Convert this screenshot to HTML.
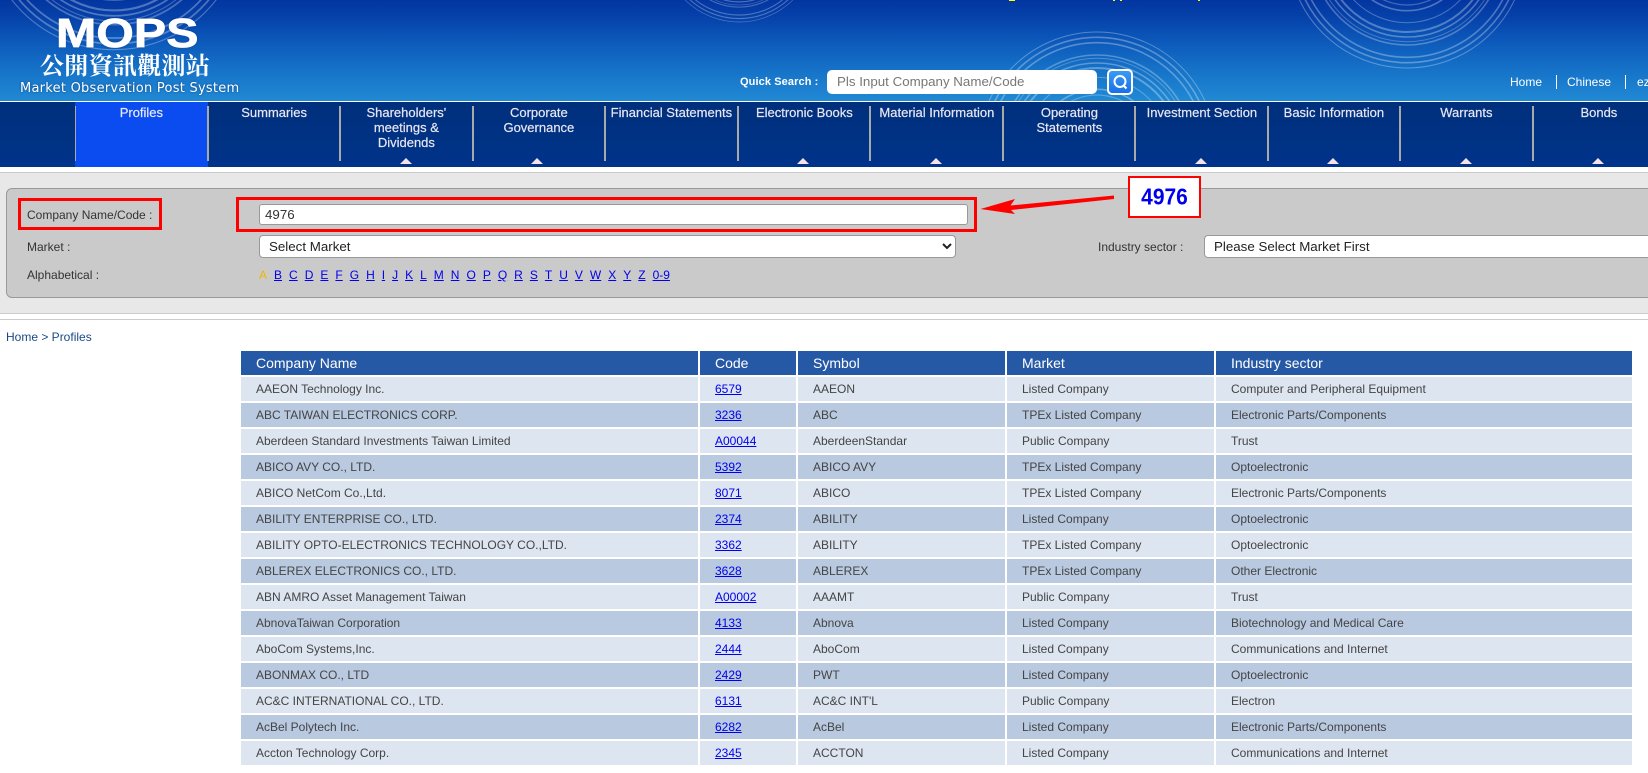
<!DOCTYPE html>
<html lang="en">
<head>
<meta charset="utf-8">
<title>MOPS - Profiles</title>
<style>
*{box-sizing:border-box}
html,body{margin:0;padding:0;width:1648px;height:773px;overflow:hidden;background:#fff}
body{position:relative;font-family:"Liberation Sans",Arial,sans-serif;font-size:12px;color:#444}
.a{position:absolute;white-space:nowrap}
#hdr{left:0;top:0;width:1648px;height:101px;background:linear-gradient(#0335a0 0%,#0540a8 15%,#0d5abb 42%,#1673c8 70%,#2189d4 100%);overflow:hidden}
#nav{left:0;top:102px;width:1648px;height:65px;background:linear-gradient(#00307c,#00338a);overflow:hidden}
.it{position:absolute;top:3px;width:132.75px;text-align:center;font-size:13px;line-height:15px;color:#e8e6f2;white-space:nowrap;-webkit-text-stroke:.2px #e8e6f2}
.sp{position:absolute;top:4px;width:2px;height:55px;background:#a9a9a9}
.tr{position:absolute;top:56px;width:0;height:0;border-left:6.5px solid transparent;border-right:6.5px solid transparent;border-bottom:6px solid #f6e2e6}
.lbl{font-size:12px;color:#333;line-height:14px}
.red{border:3px solid #f00;position:absolute}
select{position:absolute;font-family:"Liberation Sans",Arial,sans-serif;font-size:13.33px;color:#222;background:#fff;border:1px solid #999;border-radius:4px;padding:0 0 0 5px;margin:0}
#alpha{left:259px;top:268px;font-size:12px;line-height:14px}
#alpha a,#alpha span{display:inline-block;margin-right:7px}
a{color:#00e;text-decoration:underline}
table{position:absolute;left:239px;top:349px;border-collapse:separate;border-spacing:2px;table-layout:fixed;width:1395px}
th,td{height:24px;padding:0 0 0 15px;text-align:left;font-weight:normal;white-space:nowrap;overflow:hidden}
th{background:#2659a5;color:#fff;font-size:14px}
td{font-size:12px;color:#444}
tr.o td{background:#dde5f0}
tr.e td{background:#b8c9e0}
</style>
</head>
<body>
<div id="hdr" class="a">
<svg width="1648" height="101" style="position:absolute;left:0;top:0" fill="none" stroke="#fff">
<defs>
<g id="rg">
<circle r="119" stroke-opacity=".3" stroke-width="1"/>
<circle r="113.7" stroke-opacity=".3" stroke-width="1.6"/>
<circle r="108.3" stroke-opacity=".3" stroke-width="1.6"/>
<circle r="96" stroke-opacity=".28" stroke-width="1.6"/>
<circle r="92.7" stroke-opacity=".25" stroke-width="1"/>
<circle r="88" stroke-opacity=".3" stroke-width="1.6"/>
<circle r="83" stroke-opacity=".3" stroke-width="2"/>
<circle r="73.7" stroke-opacity=".28" stroke-width="1"/>
<circle r="61.7" stroke-opacity=".3" stroke-width="1.6"/>
<circle r="56" stroke-opacity=".25" stroke-width="1.2"/>
</g>
</defs>
<use href="#rg" transform="translate(1407 -51)"/>
<use href="#rg" transform="translate(1097 151)"/>
<use href="#rg" transform="translate(739 -55) scale(.647)"/>
<use href="#rg" transform="translate(114 -80) scale(1.09)"/>
</svg>
<div class="a" style="left:1009px;top:0;width:6px;height:1px;background:#ff0"></div>
<div class="a" style="left:1113px;top:0;width:2px;height:1px;background:#ff0"></div>
<div class="a" style="left:1120px;top:0;width:2px;height:1px;background:#ff0"></div>
<div class="a" style="left:1198px;top:0;width:2px;height:1px;background:#ff0"></div>

<div class="a" style="left:56px;top:10px;font-size:41px;line-height:47px;font-weight:bold;color:#fff;transform:scaleX(1.18);transform-origin:0 0;-webkit-text-stroke:.7px #fff;text-shadow:0 0 2px rgba(0,30,90,.5)">MOPS</div>
<div class="a" style="left:40px;top:52px;font-family:'Liberation Serif','Noto Serif CJK SC',serif;font-size:24px;line-height:30px;font-weight:bold;color:#fff;letter-spacing:.3px">公開資訊觀測站</div>
<div class="a" style="left:20px;top:81px;font-family:'DejaVu Sans',sans-serif;font-size:13px;line-height:16px;letter-spacing:.25px;color:#fff;text-shadow:0 0 2px rgba(0,30,90,.6)">Market Observation Post System</div>

<div class="a" style="left:740px;top:75px;font-size:11px;line-height:14px;color:#fff;font-weight:bold;letter-spacing:.1px">Quick Search :</div>
<div class="a" style="left:827px;top:70px;width:270px;height:24px;background:#fff;border-radius:5px;padding-left:10px;font-size:13.33px;line-height:24px;color:#777">Pls Input Company Name/Code</div>
<div class="a" style="left:1107px;top:69px;width:26px;height:26px;border:2px solid #fff;border-radius:5px;background:linear-gradient(#3a9bf7,#1a6fe8)">
<svg width="22" height="22" style="position:absolute;left:0;top:0" fill="none" stroke="#fff" stroke-width="2"><circle cx="11" cy="10.5" r="5.5"/><path d="M14.5 14.5 L17.5 17.5"/></svg>
</div>
<div class="a" style="left:1510px;top:75px;font-size:12px;line-height:14px;color:#fff">Home</div>
<div class="a" style="left:1556px;top:75px;width:1px;height:14px;background:#fff"></div>
<div class="a" style="left:1567px;top:75px;font-size:12px;line-height:14px;color:#fff">Chinese</div>
<div class="a" style="left:1625px;top:75px;width:1px;height:14px;background:#fff"></div>
<div class="a" style="left:1637px;top:75px;font-size:12px;line-height:14px;color:#fff">ez</div>
</div>

<div id="nav" class="a">
<div class="a" style="left:75px;top:0;width:133px;height:65px;background:#0a4cf0"></div>
<div class="sp" style="left:75px;width:1px"></div>
<div class="sp" style="left:207px"></div>
<div class="sp" style="left:339px"></div>
<div class="sp" style="left:472px"></div>
<div class="sp" style="left:604px"></div>
<div class="sp" style="left:737px"></div>
<div class="sp" style="left:869px"></div>
<div class="sp" style="left:1002px"></div>
<div class="sp" style="left:1134px"></div>
<div class="sp" style="left:1267px"></div>
<div class="sp" style="left:1399px"></div>
<div class="sp" style="left:1532px"></div>
<div class="it" style="left:75px;color:#e4e8ff">Profiles</div>
<div class="it" style="left:207.75px">Summaries</div>
<div class="it" style="left:340px">Shareholders'<br>meetings &amp;<br>Dividends</div>
<div class="it" style="left:472.5px">Corporate<br>Governance</div>
<div class="it" style="left:605px">Financial Statements</div>
<div class="it" style="left:738px">Electronic Books</div>
<div class="it" style="left:870.5px">Material Information</div>
<div class="it" style="left:1003px">Operating<br>Statements</div>
<div class="it" style="left:1135.5px">Investment Section</div>
<div class="it" style="left:1267.5px">Basic Information</div>
<div class="it" style="left:1400px">Warrants</div>
<div class="it" style="left:1532.5px">Bonds</div>
<div class="tr" style="left:400px"></div>
<div class="tr" style="left:531px"></div>
<div class="tr" style="left:797px"></div>
<div class="tr" style="left:930px"></div>
<div class="tr" style="left:1195px"></div>
<div class="tr" style="left:1327px"></div>
<div class="tr" style="left:1460px"></div>
<div class="tr" style="left:1592px"></div>
</div>

<div class="a" style="left:0;top:172px;width:1648px;height:142px;background:#e8e8e8;border-top:1px solid #ccc;border-bottom:1px solid #ccc"></div>
<div class="a" style="left:6px;top:188px;width:1660px;height:110px;background:#cacaca;border:1px solid #999;border-radius:6px"></div>
<div class="a" style="left:0;top:319px;width:1648px;height:1px;background:#ccc"></div>

<div class="a lbl" style="left:27px;top:208px">Company Name/Code :</div>
<div class="a lbl" style="left:27px;top:240px">Market :</div>
<div class="a lbl" style="left:27px;top:268px">Alphabetical :</div>
<div class="a" style="left:259px;top:204px;width:709px;height:21px;background:#fff;border:1px solid #999;border-radius:3px;padding-left:5px;font-size:13.33px;line-height:19px;color:#333">4976</div>
<select style="left:259px;top:235px;width:697px;height:23px"><option>Select Market</option></select>
<div class="a lbl" style="left:1098px;top:240px">Industry sector :</div>
<select style="left:1204px;top:235px;width:480px;height:23px"><option>Please Select Market First</option></select>
<div id="alpha" class="a"><span style="color:#f4b400">A</span><a>B</a><a>C</a><a>D</a><a>E</a><a>F</a><a>G</a><a>H</a><a>I</a><a>J</a><a>K</a><a>L</a><a>M</a><a>N</a><a>O</a><a>P</a><a>Q</a><a>R</a><a>S</a><a>T</a><a>U</a><a>V</a><a>W</a><a>X</a><a>Y</a><a>Z</a><a>0-9</a></div>

<div class="red" style="left:18px;top:198px;width:144px;height:32px"></div>
<div class="red" style="left:236px;top:197px;width:741px;height:35px"></div>
<svg class="a" style="left:975px;top:190px" width="145" height="30"><path d="M5.5 19 L40 9 L35.5 15.5 L139 5.5 L139 9 L36 20 L40 24 Z" fill="#f00"/></svg>
<div class="a" style="left:1128px;top:176px;width:73px;height:42px;background:#fff;border:2px solid #f00;text-align:center;font-size:21px;line-height:39px;font-weight:bold;color:#00e"><span style="display:inline-block;transform:scaleY(1.1)">4976</span></div>

<div class="a" style="left:6px;top:330px;font-size:12px;line-height:14px;color:#1a4a85">Home &gt; Profiles</div>

<table>
<colgroup><col style="width:457px"><col style="width:96px"><col style="width:207px"><col style="width:207px"><col style="width:416px"></colgroup>
<tr><th>Company Name</th><th>Code</th><th>Symbol</th><th>Market</th><th>Industry sector</th></tr>
<tr class="o"><td>AAEON Technology Inc.</td><td><a>6579</a></td><td>AAEON</td><td>Listed Company</td><td>Computer and Peripheral Equipment</td></tr>
<tr class="e"><td>ABC TAIWAN ELECTRONICS CORP.</td><td><a>3236</a></td><td>ABC</td><td>TPEx Listed Company</td><td>Electronic Parts/Components</td></tr>
<tr class="o"><td>Aberdeen Standard Investments Taiwan Limited</td><td><a>A00044</a></td><td>AberdeenStandar</td><td>Public Company</td><td>Trust</td></tr>
<tr class="e"><td>ABICO AVY CO., LTD.</td><td><a>5392</a></td><td>ABICO AVY</td><td>TPEx Listed Company</td><td>Optoelectronic</td></tr>
<tr class="o"><td>ABICO NetCom Co.,Ltd.</td><td><a>8071</a></td><td>ABICO</td><td>TPEx Listed Company</td><td>Electronic Parts/Components</td></tr>
<tr class="e"><td>ABILITY ENTERPRISE CO., LTD.</td><td><a>2374</a></td><td>ABILITY</td><td>Listed Company</td><td>Optoelectronic</td></tr>
<tr class="o"><td>ABILITY OPTO-ELECTRONICS TECHNOLOGY CO.,LTD.</td><td><a>3362</a></td><td>ABILITY</td><td>TPEx Listed Company</td><td>Optoelectronic</td></tr>
<tr class="e"><td>ABLEREX ELECTRONICS CO., LTD.</td><td><a>3628</a></td><td>ABLEREX</td><td>TPEx Listed Company</td><td>Other Electronic</td></tr>
<tr class="o"><td>ABN AMRO Asset Management Taiwan</td><td><a>A00002</a></td><td>AAAMT</td><td>Public Company</td><td>Trust</td></tr>
<tr class="e"><td>AbnovaTaiwan Corporation</td><td><a>4133</a></td><td>Abnova</td><td>Listed Company</td><td>Biotechnology and Medical Care</td></tr>
<tr class="o"><td>AboCom Systems,Inc.</td><td><a>2444</a></td><td>AboCom</td><td>Listed Company</td><td>Communications and Internet</td></tr>
<tr class="e"><td>ABONMAX CO., LTD</td><td><a>2429</a></td><td>PWT</td><td>Listed Company</td><td>Optoelectronic</td></tr>
<tr class="o"><td>AC&amp;C INTERNATIONAL CO., LTD.</td><td><a>6131</a></td><td>AC&amp;C INT'L</td><td>Public Company</td><td>Electron</td></tr>
<tr class="e"><td>AcBel Polytech Inc.</td><td><a>6282</a></td><td>AcBel</td><td>Listed Company</td><td>Electronic Parts/Components</td></tr>
<tr class="o"><td>Accton Technology Corp.</td><td><a>2345</a></td><td>ACCTON</td><td>Listed Company</td><td>Communications and Internet</td></tr>
</table>
</body>
</html>
